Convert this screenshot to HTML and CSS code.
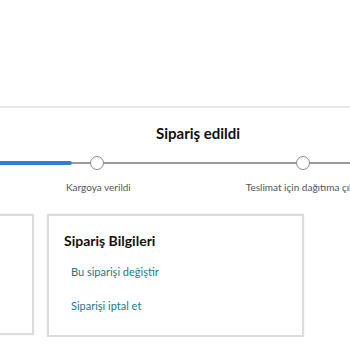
FILE: index.html
```html
<!DOCTYPE html>
<html lang="tr">
<head>
<meta charset="utf-8">
<link rel="stylesheet" href="styles.css">
</head>
<body>
<div class="page">
  <div class="top"></div>
  <section class="tracker">
    <h2 class="status">Sipariş edildi</h2>
    <div class="progress">
      <span class="done"></span>
      <span class="line seg-a"></span>
      <span class="dot"></span>
      <span class="line seg-b"></span>
      <span class="dot"></span>
      <span class="line seg-c"></span>
    </div>
    <div class="labels">
      <span class="label label-a">Kargoya verildi</span>
      <span class="label label-b">Teslimat için dağıtıma çıkarıldı</span>
    </div>
  </section>
  <section class="cards">
    <div class="card card-left"></div>
    <div class="card card-info">
      <h3 class="card-title">Sipariş Bilgileri</h3>
      <a class="link" href="#">Bu siparişi değiştir</a>
      <a class="link" href="#">Siparişi iptal et</a>
    </div>
  </section>
</div>
</body>
</html>
```

FILE: styles.css
```css
html, body {
  margin: 0;
  padding: 0;
  background: #ffffff;
}
body {
  font-family: Lato, "Noto Sans", "Liberation Sans", sans-serif;
  color: #111111;
  width: 350px;
  height: 350px;
  overflow: hidden;
}
.page {
  width: 350px;
  overflow: hidden;
}
.top {
  height: 106px;
  border-bottom: 2px solid #e7e7e7;
}
.tracker {
  padding-top: 16px;
}
.status {
  margin: 0 0 0 156px;
  font-size: 15px;
  line-height: 18px;
  font-weight: 700;
  color: #111;
}
.progress {
  margin-top: 14px;
  height: 14px;
  display: flex;
  align-items: center;
}
.done {
  width: 72px;
  height: 4px;
  background: #2a7fd6;
  border-radius: 0 2px 2px 0;
  flex: none;
}
.line {
  height: 2px;
  background: #9a9a9a;
  flex: none;
}
.seg-a { width: 18px; }
.seg-b { width: 192px; }
.seg-c { flex: 1; }
.dot {
  width: 14px;
  height: 14px;
  box-sizing: border-box;
  border: 1.5px solid #8a8a8a;
  border-radius: 50%;
  background: #fff;
  flex: none;
}
.labels {
  margin-top: 11px;
  display: flex;
  white-space: nowrap;
  font-size: 10px;
  line-height: 13px;
  color: #555;
}
.label-a { margin-left: 66px; }
.label-b { margin-left: 115px; }
.cards {
  margin-top: 20px;
  display: flex;
  align-items: flex-start;
  gap: 13px;
}
.card {
  flex: none;
  box-sizing: border-box;
  border: 2px solid #dcdcdc;
  box-shadow: 0 0 2px rgba(0,0,0,0.08);
  background: #fff;
}
.card-left {
  width: 120px;
  height: 121px;
  margin-left: -86px;
}
.card-info {
  width: 257px;
  height: 123px;
  padding: 16px 15px 0 15px;
  display: flex;
  flex-direction: column;
  align-items: flex-start;
}
.card-title {
  margin: 0;
  font-size: 14px;
  line-height: 18px;
  font-weight: 700;
  color: #111;
}
.link {
  margin-left: 7px;
  font-size: 11px;
  line-height: 14px;
  color: #1a7b8a;
  text-decoration: none;
}
.card-title + .link { margin-top: 15px; }
.link + .link { margin-top: 20px; }
```
